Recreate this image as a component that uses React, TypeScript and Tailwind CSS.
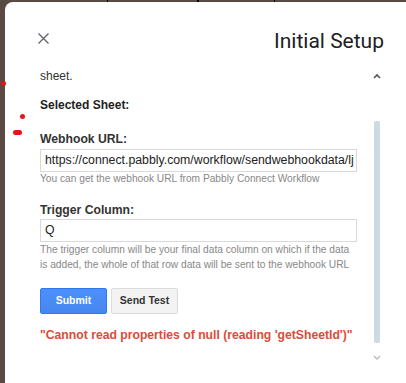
import React from 'react'

const Dot = ({ className }: { className: string }) => (
  <span className={`absolute bg-[#e8121b] rounded-full ${className}`} />
)

const App = () => {
  return (
    <div className="relative w-[406px] h-[383px] bg-[#5b4a43] overflow-hidden flex flex-col" style={{ fontFamily: '"Liberation Sans", Arial, sans-serif' }}>
      {/* strip of the sheet behind the dialog */}
      <div className="h-[2px] flex shrink-0">
        <div className="w-[107px]" />
        <div className="w-px bg-black" />
        <div className="w-[89px]" />
        <div className="w-[2px] bg-black" />
        <div className="w-[75px]" />
        <div className="w-px bg-black" />
      </div>

      <div className="flex-1 ml-[5px] bg-white rounded-tl-[8px] flex flex-col">
        {/* header */}
        <div className="flex items-center justify-between pl-[33px] pr-[22px] pt-[26px] h-[54px] shrink-0">
          <svg width="11" height="11" viewBox="0 0 11 11" className="text-[#5f6368] -mt-[8px]">
            <path d="M0.5 0.5 L10.5 10.5 M10.5 0.5 L0.5 10.5" stroke="currentColor" strokeWidth="1.3" />
          </svg>
          <h1 className="text-[21px] leading-[24px] text-[#202124] -mt-[2px]" style={{ fontFamily: 'Roboto, "Noto Sans", sans-serif' }}>Initial Setup</h1>
        </div>

        {/* scrolling body */}
        <div className="flex flex-1">
          <div className="w-[317px] ml-[35px] shrink-0">
            <p className="text-[12px] leading-[14px] text-[#333] mt-[13px]">sheet.</p>
            <p className="text-[12px] leading-[14px] font-bold text-[#222] mt-[15px]">Selected Sheet:</p>

            <label className="block text-[12.2px] leading-[14px] font-bold text-[#333] mt-[20px]">Webhook URL:</label>
            <div className="mt-[3px] h-[23px] border border-[#d9d9d9] flex items-center px-[4px] overflow-hidden">
              <span className="text-[12.3px] text-[#222] whitespace-nowrap">https://connect.pabbly.com/workflow/sendwebhookdata/lj</span>
            </div>
            <p className="text-[10.2px] leading-[12px] text-[#888] mt-[1px]">You can get the webhook URL from Pabbly Connect Workflow</p>

            <label className="block text-[12.2px] leading-[14px] font-bold text-[#333] mt-[18px]">Trigger Column:</label>
            <div className="mt-[2px] h-[23px] border border-[#d9d9d9] flex items-center px-[4px]">
              <span className="text-[12.3px] text-[#222]">Q</span>
            </div>
            <p className="text-[10.2px] leading-[15px] text-[#888]">
              The trigger column will be your final data column on which if the data is added, the whole of that row data will be sent to the webhook URL
            </p>

            <div className="flex gap-[4px] mt-[16px]">
              <button className="w-[67px] h-[26px] rounded-[2px] border border-[#3079ed] bg-gradient-to-b from-[#4d90fe] to-[#4787ed] text-white text-[10.5px] font-bold">Submit</button>
              <button className="w-[67px] h-[26px] rounded-[2px] border border-[#dcdcdc] bg-[#f3f3f3] text-[#333] text-[10.5px] font-bold">Send Test</button>
            </div>

            <p className="text-[12.2px] leading-[14px] font-bold text-[#dd4b39] mt-[14px] whitespace-nowrap">"Cannot read properties of null (reading 'getSheetId')"</p>
          </div>

          {/* scrollbar */}
          <div className="w-[7px] ml-[16px] flex flex-col items-center">
            <svg width="8" height="6" viewBox="0 0 8 6" className="mt-[17px]">
              <path d="M1 5 L4 2 L7 5" stroke="#555" strokeWidth="1.6" fill="none" />
            </svg>
            <div className="w-[6px] h-[222px] bg-[#cdd9e3] rounded-[2px] mt-[42px] shrink-0" />
            <svg width="8" height="6" viewBox="0 0 8 6" className="mt-[12px]">
              <path d="M1 1 L4 4 L7 1" stroke="#bbb" strokeWidth="1.4" fill="none" />
            </svg>
          </div>
        </div>
      </div>

      {/* annotation marks */}
      <Dot className="left-[1px] top-[81px] w-[5px] h-[5px]" />
      <Dot className="left-[20px] top-[114px] w-[5px] h-[5px]" />
      <Dot className="left-[13px] top-[130px] w-[9px] h-[5px]" />
    </div>
  )
}

export default App
